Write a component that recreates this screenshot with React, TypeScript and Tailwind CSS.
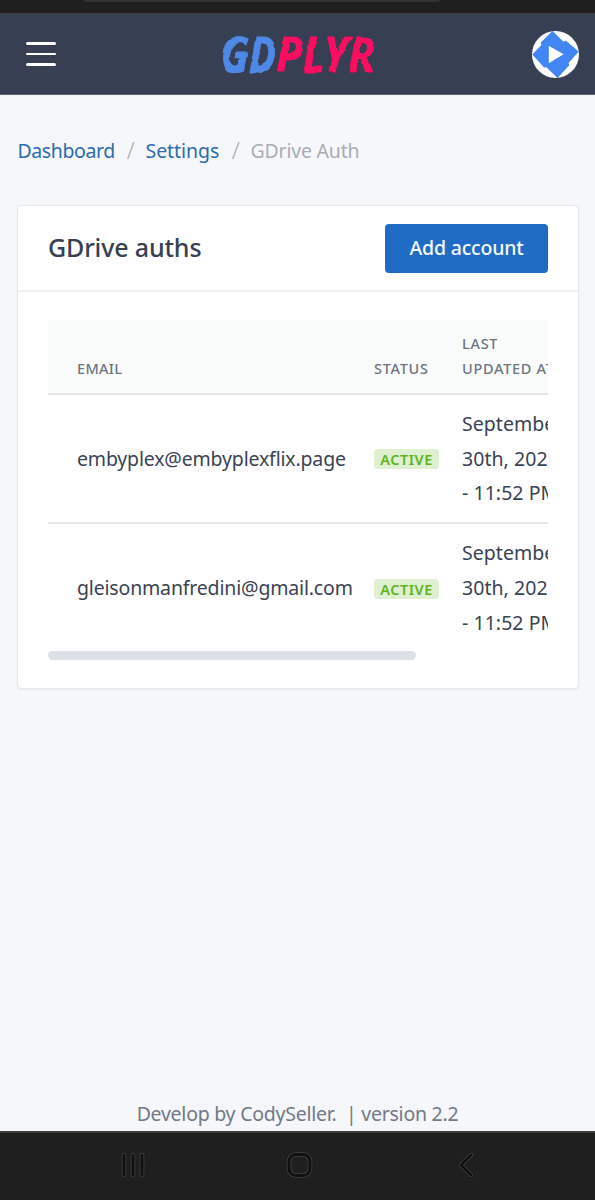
import clsx from "clsx";

interface IAuth {
  id: number;
  email: string;
  status: string;
  updatedAt: string;
}

const auths: IAuth[] = [
  {
    id: 1,
    email: "embyplex@embyplexflix.page",
    status: "Active",
    updatedAt: "September\n30th, 2021\n- 11:52 PM",
  },
  {
    id: 2,
    email: "gleisonmanfredini@gmail.com",
    status: "Active",
    updatedAt: "September\n30th, 2021\n- 11:52 PM",
  },
];

const Logo = () => (
  <svg className="w-[158px] h-[60px]" viewBox="0 0 158 60" aria-label="GDPLYR">
    <defs>
      {/* Slightly rough edges, like a dry brush */}
      <filter id="brush" x="-5%" y="-10%" width="110%" height="120%">
        <feTurbulence type="fractalNoise" baseFrequency="0.05 0.09" numOctaves="2" seed="7" />
        <feDisplacementMap in="SourceGraphic" scale="4" xChannelSelector="R" yChannelSelector="G" />
        <feGaussianBlur stdDeviation="0.3" />
      </filter>
    </defs>
    <g
      filter="url(#brush)"
      fontFamily="'Noto Sans', sans-serif"
      fontSize="48"
      fontWeight="700"
      fontStyle="italic"
      strokeWidth="0.8"
      strokeLinejoin="round"
    >
      <text x="1" y="48" fill="#5089e8" stroke="#5089e8" textLength="55" lengthAdjust="spacingAndGlyphs">
        GD
      </text>
      <text x="56" y="48" fill="#fb0a5f" stroke="#fb0a5f" textLength="99" lengthAdjust="spacingAndGlyphs">
        PLYR
      </text>
    </g>
  </svg>
);

const Avatar = () => (
  <svg className="w-[47px] h-[47px]" viewBox="0 0 140 140">
    <circle cx="70" cy="70" r="70" fill="#fff" />
    <path
      d="M61 0L93 31L101 29L139 61L109 95L111 102L76 140L43 108L36 109L1 70L28 42L26 34Z"
      fill="#4285f4"
    />
    <path d="M50 44L94 69L50 96Z" fill="#fff" />
  </svg>
);

const Header = () => (
  <header className="h-[81px] pl-[26px] pr-4 flex items-center justify-between bg-[#364052] border-b border-[#5c6573]">
    <button className="w-[30px] flex flex-col gap-[8px]" aria-label="Menu">
      <span className="w-full h-[2.5px] bg-white rounded-xs" />
      <span className="w-full h-[2.5px] bg-white rounded-xs" />
      <span className="w-full h-[2.5px] bg-white rounded-xs" />
    </button>
    <div className="pl-[9px]">
      <Logo />
    </div>
    <Avatar />
  </header>
);

const Breadcrumb = () => (
  <nav className="flex items-center h-[35px] px-[17.5px] mt-[38px] text-[19.5px] tracking-[-0.4px] text-[#a8adb5]">
    <a className="text-[#2d6bb0] w-[98px] whitespace-nowrap">Dashboard</a>
    <span className="w-[30px] text-center text-[23px] font-light">/</span>
    <a className="text-[#2d6bb0] w-[75px] whitespace-nowrap tracking-[-0.05px]">Settings</a>
    <span className="w-[30px] text-center text-[23px] font-light">/</span>
    <span className="tracking-[-0.2px]">GDrive Auth</span>
  </nav>
);

const AuthTable = () => (
  <div className="overflow-hidden">
    <table className="table-fixed w-[680px] border-collapse text-left">
      <colgroup>
        <col className="w-[314px]" />
        <col className="w-[88px]" />
        <col className="w-[130px]" />
        <col />
      </colgroup>
      <thead className="bg-[#fafcfc] text-[14.5px] leading-[25px] tracking-[0.7px] text-[#6c7480] uppercase">
        <tr className="h-[74px] border-b-2 border-[#e2e6e8] align-bottom">
          <th className="pl-[29px] pb-3 font-medium tracking-[0.3px]">Email</th>
          <th className="px-3 pb-3 font-medium">Status</th>
          <th className="pl-3 pb-3 font-medium whitespace-nowrap">
            Last
            <br />
            Updated at
          </th>
          <th />
        </tr>
      </thead>
      <tbody className="text-[19.5px] leading-[34.7px] text-[#3a4353]">
        {auths.map((auth, index) => (
          <tr
            key={auth.id}
            className={clsx(
              "h-[129px]",
              index < auths.length - 1 && "border-b-2 border-[#e6e8ea]"
            )}
          >
            <td className="pl-[29px] pt-px whitespace-nowrap tracking-[-0.17px]">{auth.email}</td>
            <td className="pl-3 pt-px">
              <span className="flex items-center justify-center w-[65px] h-5 rounded bg-[#dff0d0] text-[#5eb41b] text-[14.5px] leading-5 font-semibold tracking-[0.5px] uppercase">
                {auth.status}
              </span>
            </td>
            <td className="pl-3 pt-px whitespace-pre tracking-[0.05px]">{auth.updatedAt}</td>
            <td />
          </tr>
        ))}
      </tbody>
    </table>
    <div className="w-[368px] h-[9px] -mt-px rounded-full bg-[#dde0e9]" />
  </div>
);

const SystemBar = () => (
  <div className="h-[69px] shrink-0 bg-[#1f1f1f] border-t-2 border-[#3c3d3c] flex items-center pl-[120px] pb-[3px]">
    <svg className="w-[26px] h-[30px]" viewBox="0 0 26 30" fill="none" strokeLinecap="round">
      <path d="M4 5V25M13 5V25M22 5V25" stroke="#454545" strokeWidth="4.5" />
      <path d="M4 5V25M13 5V25M22 5V25" stroke="#101010" strokeWidth="3" />
    </svg>
    <svg className="w-[30px] h-[30px] ml-[138px]" viewBox="0 0 30 30" fill="none">
      <rect x="5" y="4.5" width="21" height="21" rx="7" stroke="#454545" strokeWidth="4.5" />
      <rect x="5" y="4.5" width="21" height="21" rx="7" stroke="#101010" strokeWidth="3" />
    </svg>
    <svg
      className="w-[20px] h-[30px] ml-[141px]"
      viewBox="0 0 20 30"
      fill="none"
      strokeLinecap="round"
      strokeLinejoin="round"
    >
      <path d="M16 5L6 15L16 25" stroke="#454545" strokeWidth="4" />
      <path d="M16 5L6 15L16 25" stroke="#101010" strokeWidth="2.6" />
    </svg>
  </div>
);

const App: React.FC = () => {
  return (
    <div className="w-[595px] h-[1200px] flex flex-col overflow-hidden bg-[#f5f7fb] font-['Noto_Sans',sans-serif]">
      {/* Status bar */}
      <div className="h-[14px] shrink-0 bg-[#1f1f1f] border-b border-[#3d3f42]">
        <div className="w-[356px] h-[2px] ml-[84px] rounded-b-full bg-[#303234]" />
      </div>
      <Header />
      <Breadcrumb />

      <main className="w-[562px] ml-[17px] mt-[37px] h-[484px] bg-white border border-[#e6e8ed] rounded shadow-xs">
        <div className="h-[86px] px-[30px] flex items-center justify-between border-b-2 border-[#eff0f2]">
          <h3 className="text-[25px] font-medium tracking-[-0.15px] text-[#364052]">
            GDrive auths
          </h3>
          <button className="w-[163px] h-[49px] rounded bg-[#206bc4] text-[19.5px] font-medium tracking-[-0.2px] text-[#f5faff]">
            Add account
          </button>
        </div>
        <div className="px-[30px] pt-7">
          <AuthTable />
        </div>
      </main>

      <footer className="mt-auto h-[34px] flex justify-center text-[19.5px] leading-[34px] tracking-[-0.25px] text-[#717986] whitespace-pre">
        Develop by CodySeller.  | version 2.2
      </footer>
      <SystemBar />
    </div>
  );
};

export default App;
